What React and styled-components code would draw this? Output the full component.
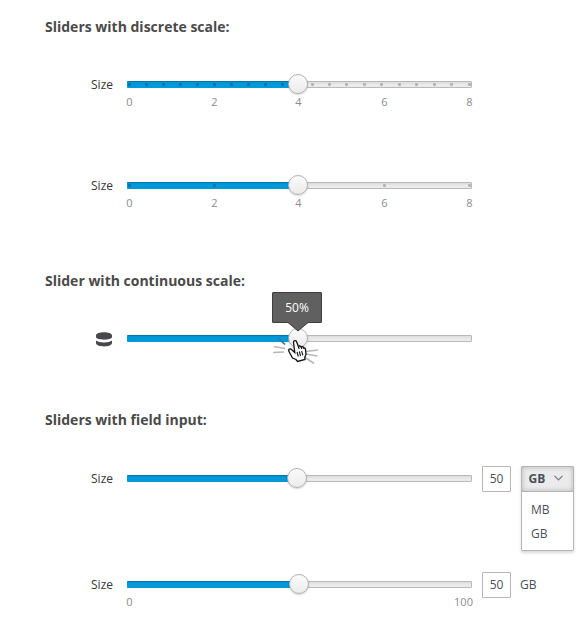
import React from "react";
import styled, { createGlobalStyle } from "styled-components";

const Global = createGlobalStyle`
  * { box-sizing: border-box; }
  body { margin: 0; background: #fff; }
`;

const Page = styled.main`
  width: 582px;
  height: 637px;
  padding: 17px 0 0 45px;
  overflow: hidden;
  background: #fff;
  color: #48484a;
  font-family: "Open Sans", sans-serif;
  font-size: 12px;
`;

const Section = styled.section`
  height: ${(p) => p.$height}px;
`;

const Heading = styled.h2`
  margin: 0 0 ${(p) => p.$gap || 34}px;
  font-size: 14px;
  line-height: 20px;
  font-weight: 700;
  color: #4a4a4a;
  white-space: nowrap;
`;

const Row = styled.div`
  display: grid;
  grid-template-columns: 68px 345px 29px 53px;
  column-gap: 10px;
  height: ${(p) => p.$height || 27}px;
`;

const Label = styled.div`
  height: 27px;
  display: flex;
  justify-content: flex-end;
  align-items: center;
  color: #363638;
`;

const Control = styled.div`
  margin-left: 4px;
  width: 345px;
`;

const Rail = styled.div`
  position: relative;
  display: flex;
  align-items: center;
  height: 27px;
`;

const Track = styled.div`
  display: flex;
  width: 345px;
  height: 7px;
  border: 1px solid #b9b9b9;
  border-radius: 1px;
  background: linear-gradient(#dcdcdc, #ebebeb 60%);
`;

const Fill = styled.div`
  width: ${(p) => p.$width}px;
  height: 7px;
  margin: -1px 0 0 -1px;
  background: linear-gradient(#0675ad 0, #0675ad 1px, #0090cf 1px, #009bdb 3px, #0098d7);
  border-radius: 1px 0 0 1px;
`;

const Dot = styled.i`
  position: absolute;
  left: ${(p) => p.$x}px;
  top: 12px;
  width: 3px;
  height: 3px;
  border-radius: 1px;
  background: ${(p) => (p.$filled ? "#0872ad" : "#b3b3b3")};
`;

const Knob = styled.div`
  position: absolute;
  left: ${(p) => p.$x}px;
  top: 3px;
  width: 20px;
  height: 20px;
  border: 1px solid #b2b2b2;
  border-radius: 50%;
  background: linear-gradient(#fbfbfb, #ebebeb);
  box-shadow: 0 1px 2px rgba(0, 0, 0, 0.18);
`;

const Scale = styled.div`
  display: flex;
  justify-content: space-between;
  margin-top: -4px;
  padding: 0 ${(p) => p.$end || 2.5}px 0 2.5px;
  font-size: 11px;
  line-height: 16px;
  color: #8c8c8c;
`;

const Mark = styled.span`
  display: flex;
  justify-content: center;
  width: 0;
  &:nth-child(3) { margin: 0 1px 0 -1px; }
`;

const Tooltip = styled.div`
  position: absolute;
  left: 145px;
  top: -33px;
  width: 50px;
  height: 31px;
  border: 1px solid #3e3e3e;
  border-radius: 1px;
  background: #606060;
  color: #fff;
  line-height: 30px;
  text-align: center;
`;

const Arrow = styled.svg`
  position: absolute;
  left: 14px;
  top: 28px;
  width: 22px;
  height: 11px;
`;

const Cursor = styled.svg`
  position: absolute;
  left: 143px;
  top: 3px;
  width: 50px;
  height: 40px;
`;

const Disk = styled.svg`
  width: 16px;
  height: 15px;
  margin: 1px 1px 0 0;
`;

const Field = styled.div`
  margin: 1px 0 0 4px;
  width: 29px;
  height: 26px;
  border: 1px solid #b5b5b5;
  border-radius: 1px;
  line-height: 24px;
  text-align: center;
  color: #48505a;
`;

const Unit = styled.div`
  margin-left: 3px;
  line-height: 27px;
  color: #48505a;
`;

const Select = styled.div`
  margin: 1px 0 0 4px;
  width: 53px;
  height: 85px;
  border: 1px solid #b5b5b5;
  border-radius: 1px;
  box-shadow: 0 2px 3px rgba(0, 0, 0, 0.15);
  color: #48505a;
`;

const Selected = styled.div`
  display: flex;
  align-items: center;
  justify-content: space-between;
  height: 25px;
  padding: 0 10px 2px 6.5px;
  border-bottom: 1px solid #b5b5b5;
  background: #ebebeb;
  box-shadow: inset 0 0 5px rgba(0, 0, 0, 0.24);
  font-weight: 700;
`;

const Chevron = styled.svg`
  width: 9px;
  height: 6px;
`;

const Options = styled.div`
  padding-top: 6px;
`;

const Option = styled.div`
  height: 24px;
  padding-left: 9px;
  line-height: 24px;
`;

const TENTHS = [0, 17, 34, 51, 68, 85, 102, 119, 136, 153, 183, 200, 217, 235, 252, 270, 287, 305, 322, 340];
const PAIRS = [0, 85, 255, 340];

function Slider({ knob = 161, dots = [], marks, end, children }) {
  return (
    <Control>
      <Rail>
        <Track><Fill $width={knob + 10} /></Track>
        {dots.map((x) => <Dot key={x} $x={x + 1} $filled={x < 170} />)}
        <Knob $x={knob} />
        {children}
      </Rail>
      {marks && <Scale $end={end}>{marks.map((m) => <Mark key={m}>{m}</Mark>)}</Scale>}
    </Control>
  );
}

function PointerClick() {
  return (
    <Cursor viewBox="0 0 50 40">
      <g stroke="#b8b8b8" strokeWidth="1.7" fill="none">
        <path d="M4 18.500 15 20.500M3 24.500 14 24M36 23.500 48 22M36 26 47.500 28M34.500 29 44 35.500" />
        <path d="M8.500 10.500 15 16.500" stroke="#3b7391" />
      </g>
      <path
        d="M23.500 14.500Q23.300 12.800 24.700 12.600Q26 12.300 26.500 13.500L28.500 18.800Q29.600 17.300 30.800 18.500L31.200 19.200Q32.500 17.800 33.500 19.500L33.700 20.200Q35 19.600 35.400 21L36 26.500L34.800 29L35 31.500L27.500 33.500L26 31.500L22.500 30L19.500 24.500Q18 22 19.300 21Q20.800 20.300 22 22L24.800 24.500Z"
        fill="#fff" stroke="#111" strokeWidth="1.3"
      />
      <path d="m27 24 1.300 4.500m1-5 1.300 4.500m1-5 1.300 4.300M28.500 18.500l.7 2.500M31.200 19l.7 2" stroke="#111" strokeWidth="1.100" fill="none" />
    </Cursor>
  );
}

export default function App() {
  return (
    <>
      <Global />
      <Page>
        <Section $height={254}>
          <Heading>Sliders with discrete scale:</Heading>
          <Row $height={101}>
            <Label>Size</Label>
            <Slider dots={TENTHS} marks={[0, 2, 4, 6, 8]} />
          </Row>
          <Row>
            <Label>Size</Label>
            <Slider dots={PAIRS} marks={[0, 2, 4, 6, 8]} />
          </Row>
        </Section>
        <Section $height={139}>
          <Heading>Slider with continuous scale:</Heading>
          <Row>
            <Label>
              <Disk viewBox="0 0 16 15" fill="#48484a">
                <path d="M0 3.500C0-.8 16-.8 16 3.500V5C16 8.500 0 8.500 0 5ZM0 8.500c3 2.500 13 2.500 16 0V11c0 4.500-16 4.500-16 0Z" />
              </Disk>
            </Label>
            <Slider>
              <Tooltip>
                50%
                <Arrow viewBox="0 0 22 11">
                  <path d="M0 0v1l11 9 11-9V0Z" fill="#606060" />
                  <path d="m1 1.500 10 8.500 10-8.500" fill="none" stroke="#3e3e3e" />
                </Arrow>
              </Tooltip>
              <PointerClick />
            </Slider>
          </Row>
        </Section>
        <Section $height={227}>
          <Heading $gap={35}>Sliders with field input:</Heading>
          <Row $height={106}>
            <Label>Size</Label>
            <Slider knob={160} />
            <Field>50</Field>
            <Select>
              <Selected>
                GB
                <Chevron viewBox="0 0 9 6" fill="none" stroke="#777c83" strokeWidth="1.2">
                  <path d="m.5.800 4 4 4-4" />
                </Chevron>
              </Selected>
              <Options>
                <Option>MB</Option>
                <Option>GB</Option>
              </Options>
            </Select>
          </Row>
          <Row>
            <Label>Size</Label>
            <Slider knob={162} marks={[0, 100]} end={8.5} />
            <Field>50</Field>
            <Unit>GB</Unit>
          </Row>
        </Section>
      </Page>
    </>
  );
}
